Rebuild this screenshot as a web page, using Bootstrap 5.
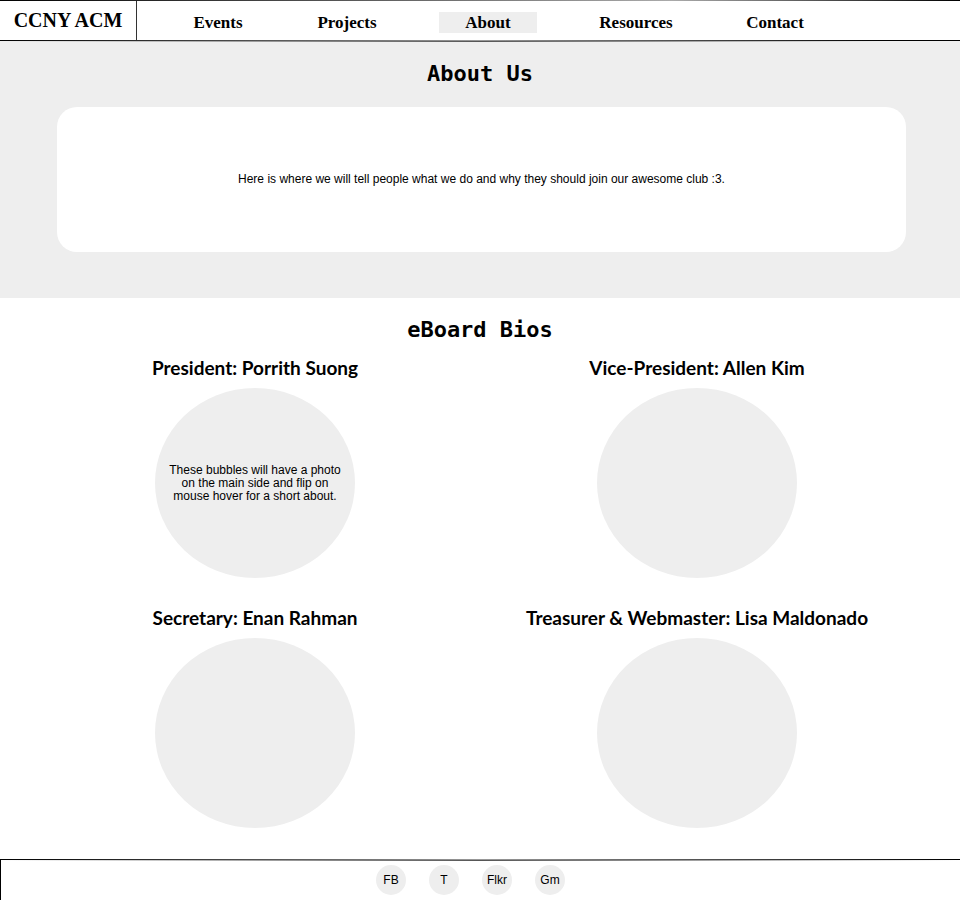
<!DOCTYPE html>
<html lang="en">
<head>
<meta charset="utf-8">
<meta name="viewport" content="width=device-width, initial-scale=1">
<title>CCNY ACM - About</title>
<link href="https://cdn.jsdelivr.net/npm/bootstrap@5.3.0/dist/css/bootstrap.min.css" rel="stylesheet">
<style>
  body { font-family: "Liberation Sans", Arial, sans-serif; font-size: 12px; line-height: 13px; color: #000; background: #fff; }
  a { color: #000; text-decoration: none; }
  .soft { background-color: #eee; }
  /* hairlines that fade between two pixel rows */
  .site-head {
    min-height: 42px; padding: 1px 0 2px;
    font-family: "Liberation Serif", "Times New Roman", serif; font-weight: 700;
    background:
      linear-gradient(90deg, #000, #aaa 70%, #000) top / 100% 1px no-repeat,
      linear-gradient(90deg, #000, #999 50%, #000 92%) 0 40px / 100% 1px no-repeat,
      linear-gradient(90deg, #eee, #555 50%, #eee 92%) 0 41px / 100% 1px no-repeat, #fff;
  }
  .site-brand { width: 137px; border-right: 1px solid #333; font-size: 20px; }
  .site-links { display: grid; grid-template-columns: 17fr 128fr 130fr 152fr 144fr 134fr 118fr; font-size: 17px; padding-top: 3px; }
  .site-links li:first-child { grid-column: 2; }
  .site-links a { display: block; width: 98px; line-height: 21px; text-align: center; }
  .page-title { font-family: "DejaVu Sans Mono", monospace; font-size: 22px; line-height: 26px; font-weight: 700; }
  .about-area { padding: 19px 0 46px; }
  .about-box { min-height: 145px; margin: 20px 54px 0 57px; border-radius: 20px; background: #fff; }
  .bios-area { padding: 19px 0 31px; }
  .bios-grid { padding: 13px 42px 0 34px; }
  .bio-name { font-family: Lato, Carlito, sans-serif; font-size: 19px; line-height: 24px; font-weight: 700; }
  .bubble { width: 200px; height: 190px; }
  .site-foot {
    gap: 23px; padding: 6px 20px 5px 0; border-left: 1px solid #000;
    background:
      linear-gradient(90deg, #000, #999 50%, #000) top / 100% 1px no-repeat,
      linear-gradient(90deg, #fff, #555 50%, #fff) 0 1px / 100% 1px no-repeat;
  }
  .dot-link { width: 30px; height: 30px; }
</style>
<script src="https://cdn.jsdelivr.net/npm/bootstrap@5.3.0/dist/js/bootstrap.bundle.min.js"></script>
</head>
<body class="d-flex flex-column min-vh-100">
<header class="site-head d-flex">
  <a class="site-brand d-flex align-items-center justify-content-center flex-shrink-0" href="#">CCNY ACM</a>
  <nav class="flex-grow-1 d-flex align-items-center" aria-label="Main">
    <ul class="site-links list-unstyled mb-0 w-100">
      <li class="d-flex justify-content-center"><a href="#">Events</a></li>
      <li class="d-flex justify-content-center"><a href="#">Projects</a></li>
      <li class="d-flex justify-content-center"><a class="soft" href="#" aria-current="page">About</a></li>
      <li class="d-flex justify-content-center"><a href="#">Resources</a></li>
      <li class="d-flex justify-content-center"><a href="#">Contact</a></li>
    </ul>
  </nav>
</header>
<main class="flex-grow-1">
  <section class="about-area soft text-center">
    <h1 class="page-title mb-0">About Us</h1>
    <div class="about-box d-flex align-items-center justify-content-center p-3">
      <p class="mb-0">Here is where we will tell people what we do and why they should join our awesome club :3.</p>
    </div>
  </section>
  <section class="bios-area text-center">
    <h2 class="page-title mb-0">eBoard Bios</h2>
    <div class="bios-grid">
      <div class="row g-0">
        <div class="col-6 d-flex flex-column align-items-center">
          <h3 class="bio-name mb-2">President: Porrith Suong</h3>
          <div class="bubble soft rounded-circle d-flex align-items-center p-2"><p class="mb-0 px-1">These bubbles will have a photo on the main side and flip on mouse hover for a short about.</p></div>
        </div>
        <div class="col-6 d-flex flex-column align-items-center">
          <h3 class="bio-name mb-2">Vice-President: Allen Kim</h3>
          <div class="bubble soft rounded-circle"></div>
        </div>
      </div>
      <div class="row g-0 pt-4 mt-1">
        <div class="col-6 d-flex flex-column align-items-center">
          <h3 class="bio-name mb-2">Secretary: Enan Rahman</h3>
          <div class="bubble soft rounded-circle"></div>
        </div>
        <div class="col-6 d-flex flex-column align-items-center">
          <h3 class="bio-name mb-2">Treasurer &amp; Webmaster: Lisa Maldonado</h3>
          <div class="bubble soft rounded-circle"></div>
        </div>
      </div>
    </div>
  </section>
</main>
<footer class="site-foot d-flex justify-content-center">
  <a class="dot-link soft rounded-circle d-flex align-items-center justify-content-center" href="#">FB</a>
  <a class="dot-link soft rounded-circle d-flex align-items-center justify-content-center" href="#">T</a>
  <a class="dot-link soft rounded-circle d-flex align-items-center justify-content-center" href="#">Flkr</a>
  <a class="dot-link soft rounded-circle d-flex align-items-center justify-content-center" href="#">Gm</a>
</footer>
</body>
</html>
